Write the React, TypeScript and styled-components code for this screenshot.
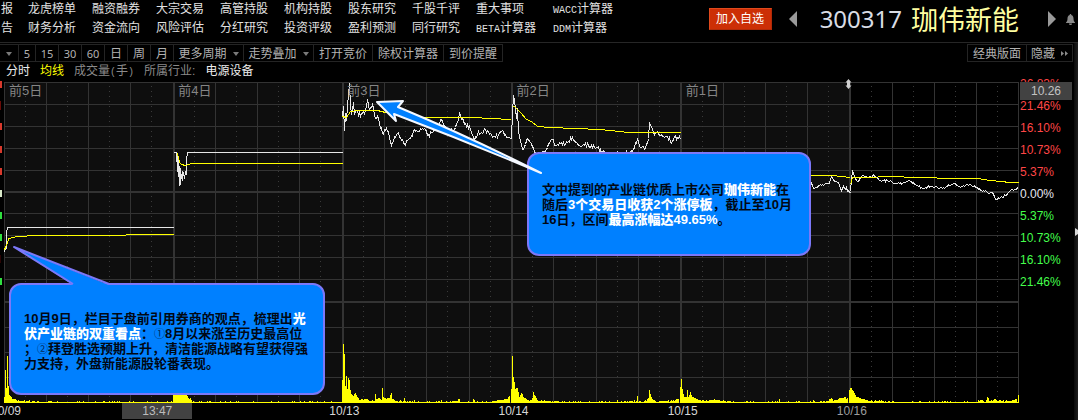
import React from "react";
import styled, { createGlobalStyle, css } from "styled-components";

const cjk = `"Liberation Sans", "Noto Sans CJK SC", sans-serif`;

const GlobalStyle = createGlobalStyle`
  * { box-sizing: border-box; }
  body { margin: 0; background: #000; }
  button { font: inherit; color: inherit; margin: 0; padding: 0; cursor: pointer; }
`;

const Page = styled.div`
  display: flex;
  flex-direction: column;
  min-height: 100vh;
  overflow: hidden;
  background: #000;
  color: #dcdcdc;
  font-family: ${cjk};
  font-size: 12px;
`;

/* ---------- header ---------- */

const Header = styled.header`
  display: flex;
  justify-content: space-between;
  min-height: 43px;
  border-bottom: 1px solid #262626;
`;

const Nav = styled.nav`
  display: grid;
  grid-template-rows: repeat(2, 16px);
  grid-auto-flow: column;
  grid-template-columns: 27px repeat(7, 64px) 77px auto;
  row-gap: 3px;
  align-content: start;
  padding: 1px 0 0 1px;
`;

const NavLink = styled.a`
  color: #e2e2e2;
  line-height: 16px;
  text-decoration: none;
  white-space: nowrap;
`;

const Code = styled.span`
  font-family: "Liberation Mono", monospace;
  font-size: 10px;
  line-height: 1;
`;

const Quote = styled.div`
  display: flex;
  align-items: center;
  height: 38px;
  padding-right: 3px;
`;

const AddButton = styled.button`
  width: 63px;
  height: 22px;
  margin-right: 17px;
  border: 1px solid #e0491c;
  border-right-color: #b02a08;
  border-bottom-color: #b02a08;
  background: #cc2f06;
  color: #fff;
  line-height: 20px;
`;

const IconButton = styled.button`
  display: flex;
  border: 0;
  background: none;
`;

const Symbol = styled.h1`
  display: flex;
  align-items: center;
  gap: 9px;
  margin: 0 28px 0 23px;
  font-weight: 400;
  line-height: 38px;
`;

const Ticker = styled.span`
  color: #d8dce4;
  font-family: "Noto Sans", sans-serif;
  font-size: 24px;
`;

const StockName = styled.span`
  padding-top: 3px;
  color: #ffffa0;
  font-size: 27px;
`;

const Bell = styled(IconButton)`
  margin-left: 10px;
`;

/* ---------- toolbar ---------- */

const Body = styled.div`
  display: flex;
  flex: 1;
`;

const Main = styled.main`
  display: flex;
  flex: 1;
  flex-direction: column;
  min-width: 0;
`;

const Bar = styled.div`
  display: flex;
  justify-content: space-between;
  margin-top: 1px;
  padding-right: 1px;
`;

const Group = styled.div<{ $framed?: boolean }>`
  display: flex;
  border: solid #242424;
  border-width: 1px 0;
  ${(p) => p.$framed && css`border-left-width: 1px;`}
`;

const Tool = styled.button<{ $w: number }>`
  display: flex;
  align-items: center;
  justify-content: center;
  gap: 6px;
  width: ${(p) => p.$w}px;
  height: 16px;
  padding-top: 1px;
  border: 0;
  border-right: 1px solid #242424;
  background: none;
  color: #b2b2b2;
  font-family: "Noto Sans", "Noto Sans CJK SC", sans-serif;
  line-height: 16px;
  white-space: nowrap;
`;

const Digits = styled.span`
  font-size: 11px;
`;

const Info = styled.div`
  display: flex;
  gap: 10px;
  height: 20px;
  padding: 0 6px;
  line-height: 18px;
  white-space: nowrap;
`;

const Label = styled.span<{ $tone: "white" | "yellow" | "grey" }>`
  color: ${(p) => ({ white: "#ececec", yellow: "#ffff00", grey: "#8a8a8a" })[p.$tone]};
`;

/* ---------- chart ---------- */

const ChartGrid = styled.section`
  display: grid;
  grid-template-columns: 4px minmax(0, 1fr) 55px;
`;

const Plot = styled.div`
  position: relative;
  grid-column: 2;
  height: 321px;
`;

const Drawing = styled.svg`
  display: block;
  width: 100%;
  height: 100%;
  overflow: visible;
`;

const DayRow = styled.div`
  position: absolute;
  inset: 0 0 auto;
  display: grid;
  grid-template-columns: repeat(6, 1fr);
  color: #858585;
  font-size: 13px;
  line-height: 18px;
`;

const Day = styled.span`
  padding-left: 5px;
`;

const Scale = styled.ol`
  position: relative;
  margin: -9px 0 0;
  padding: 0;
  list-style: none;
`;

const Tick = styled.li<{ $tone: "up" | "flat" | "down" }>`
  height: 22px;
  padding-left: 1px;
  line-height: 22px;
  color: ${(p) => ({ up: "#ff4646", flat: "#e6e6f0", down: "#44ff4c" })[p.$tone]};
`;

const PriceTag = styled.div`
  position: absolute;
  top: 9px;
  left: 1px;
  width: 52px;
  height: 18px;
  background: #424242;
  color: #c2c2c2;
  line-height: 19px;
  text-align: center;
`;

const Dates = styled.div`
  position: relative;
  grid-column: 1 / 3;
  display: grid;
  grid-template-columns: repeat(6, 1fr);
  height: 17px;
  padding-left: 4px;
  line-height: 17px;
  color: #d6d6d6;
`;

const DateLabel = styled.span<{ $dim?: boolean }>`
  margin-left: -13px;
  ${(p) => p.$dim && css`color: #9c9c9c;`}
`;

const TimeTag = styled.div`
  position: absolute;
  top: 0;
  left: 12%;
  width: 70px;
  height: 16px;
  background: #424242;
  color: #bcbcbc;
  line-height: 17px;
  text-align: center;
`;

const Callout = styled.aside<{ $left: number; $top: number; $w: number; $h: number; $pad: number }>`
  position: absolute;
  left: ${(p) => p.$left}px;
  top: ${(p) => p.$top}px;
  width: ${(p) => p.$w}px;
  height: ${(p) => p.$h}px;
  padding: ${(p) => p.$pad}px 0 0 13px;
  border: 2px solid #7c78f8;
  border-radius: 12px;
  background: #0080ff;
  color: #000814;
  font-size: 13px;
  font-weight: 700;
  line-height: 15px;
  white-space: nowrap;
`;

const Pointer = styled.svg`
  position: absolute;
  left: -2px;
  top: -2px;
  width: 1px;
  height: 1px;
  overflow: visible;
`;

const Em = styled.strong`
  color: #fff;
`;

const Circled = styled.span`
  color: #002a5c;
  font-family: "Noto Sans CJK SC", sans-serif;
  font-size: 11px;
  font-weight: 400;
  line-height: 1;
`;

const SideRail = styled.button`
  display: flex;
  align-items: center;
  justify-content: flex-end;
  width: 4px;
  padding-bottom: 0;
  border: 0;
  background: linear-gradient(90deg, #0a0a0a, #1e1e1e);
`;

/* ---------- data ---------- */

const nav = [
  ["报", "告"],
  ["龙虎榜单", "财务分析"],
  ["融资融券", "资金流向"],
  ["大宗交易", "风险评估"],
  ["高管持股", "分红研究"],
  ["机构持股", "投资评级"],
  ["股东研究", "盈利预测"],
  ["千股千评", "同行研究"],
  ["重大事项", "BETA计算器"],
  ["WACC计算器", "DDM计算器"],
].flat();

const tools: { text: string; w: number; menu?: boolean }[] = [
  { text: "5", w: 17 },
  { text: "15", w: 23 },
  { text: "30", w: 23 },
  { text: "60", w: 23 },
  { text: "日", w: 23 },
  { text: "周", w: 23 },
  { text: "月", w: 23 },
  { text: "更多周期", w: 70, menu: true },
  { text: "走势叠加", w: 70, menu: true },
  { text: "打开竞价", w: 59 },
  { text: "除权计算器", w: 71 },
  { text: "到价提醒", w: 59 },
];

const ticks = ["26.83%", "21.46%", "16.10%", "10.73%", "5.37%", "0.00%", "5.37%", "10.73%", "16.10%", "21.46%"];

type Pt = [number, number];

// Small repeatable jitter so the intraday lines look traded rather than drawn.
const jitter = (x: number) => {
  const s = Math.sin(x * 127.1 + 11.7) * 43758.5453;
  return (s - Math.floor(s)) * 2 - 1;
};

const sample = (keys: Pt[], amp: number) => {
  const out: string[] = [];
  for (let i = 0; i < keys.length - 1; i++) {
    const [x0, y0] = keys[i];
    const [x1, y1] = keys[i + 1];
    out.push(`${x0},${y0}`);
    for (let x = x0 + 1; x < x1; x++) {
      const y = y0 + ((y1 - y0) * (x - x0)) / (x1 - x0) + jitter(x) * amp;
      out.push(`${x},${Math.round(y)}`);
    }
  }
  out.push(keys[keys.length - 1].join());
  return out.join(" ");
};

const price: { keys: Pt[]; amp: number }[] = [
  { amp: 0, keys: [[4, 252], [5, 247], [6, 248], [6, 233], [7, 227], [173, 227]] },
  { amp: 0, keys: [[173, 152], [176, 152], [177, 171], [177, 154], [178, 176], [178, 160], [179, 185], [179, 166], [180, 184], [180, 168], [181, 178], [182, 171], [182, 180], [183, 172], [184, 178], [185, 172], [186, 174], [186, 160], [187, 152], [342, 152]] },
  { amp: 2.6, keys: [[342, 116], [343, 106], [344, 130], [345, 113], [346, 120], [348, 95], [349, 83], [350, 105], [351, 114], [353, 102], [354, 114], [356, 110], [358, 115], [361, 113], [365, 110], [367, 99], [369, 110], [372, 104], [375, 118], [378, 118], [382, 133], [385, 130], [388, 131], [391, 145], [394, 136], [397, 133], [400, 137], [404, 144], [408, 139], [411, 135], [414, 129], [418, 131], [422, 128], [428, 134], [432, 132], [436, 128], [441, 119], [444, 126], [448, 130], [453, 130], [457, 122], [459, 113], [461, 119], [464, 124], [469, 126], [471, 132], [474, 140], [477, 134], [481, 132], [485, 129], [490, 133], [495, 137], [500, 131], [505, 134], [509, 137], [511, 138]] },
  { amp: 2.2, keys: [[511, 138], [512, 112], [513, 95], [515, 108], [516, 118], [517, 108], [518, 132], [520, 142], [523, 149], [526, 140], [528, 139], [531, 143], [534, 152], [540, 155], [545, 150], [548, 143], [552, 139], [555, 145], [560, 143], [565, 144], [568, 141], [572, 137], [577, 143], [582, 145], [588, 145], [592, 147], [597, 147], [602, 152], [615, 154], [628, 153], [633, 148], [637, 139], [640, 147], [645, 148], [648, 138], [649, 122], [651, 126], [654, 134], [658, 133], [662, 136], [667, 136], [671, 143], [674, 136], [680, 139]] },
  { amp: 1.2, keys: [[805, 186], [811, 183], [814, 188], [817, 187], [820, 184], [824, 184], [829, 183], [831, 176], [835, 181], [838, 182], [841, 190], [843, 186], [850, 192]] },
  { amp: 1.2, keys: [[850, 191], [851, 178], [852, 171], [854, 176], [857, 181], [862, 175], [868, 177], [874, 175], [880, 180], [890, 180], [895, 183], [902, 183], [908, 180], [915, 184], [923, 188], [930, 186], [940, 187], [947, 186], [953, 183], [960, 187], [967, 184], [977, 187], [984, 191], [992, 192], [995, 199], [1000, 197], [1005, 195], [1010, 190], [1018, 188]] },
];

const average: Pt[][] = [
  [[4, 250], [5, 246], [7, 243], [8, 238], [14, 237], [15, 236], [26, 236], [27, 235], [125, 235], [126, 234], [173, 234]],
  [[177, 153], [179, 162], [181, 164], [185, 165], [188, 164], [191, 163], [342, 163]],
  [[342, 116], [346, 117], [350, 111], [358, 110], [377, 110], [385, 112], [400, 115], [420, 117], [473, 117], [490, 118], [511, 119]],
  [[512, 106], [514, 106], [520, 112], [526, 119], [531, 121], [537, 126], [550, 127], [575, 128], [600, 129], [628, 132], [680, 132]],
  [[805, 175], [832, 175], [840, 176], [850, 177]],
  [[850, 184], [852, 177], [903, 176], [904, 177], [936, 177], [937, 178], [977, 178], [990, 180], [1010, 182], [1018, 182]],
];

const volumeKeys: Pt[] = [
  [4, 6], [5, 33], [6, 15], [7, 47], [8, 17], [9, 8], [12, 4], [20, 2], [60, 1], [172, 1],
  [173, 8], [175, 13], [180, 16], [186, 9], [188, 5], [190, 5], [192, 1], [341, 1],
  [342, 23], [343, 59], [344, 49], [345, 17], [346, 27], [347, 14], [348, 25], [349, 23], [350, 13], [351, 9], [353, 7], [355, 10], [357, 6], [360, 3], [365, 4], [370, 2], [374, 2], [375, 9], [376, 4], [378, 5], [381, 3], [382, 15], [383, 6], [386, 4], [389, 5], [391, 10], [392, 4], [395, 2], [403, 2], [404, 5], [405, 2], [413, 1], [414, 3], [415, 1], [440, 1], [441, 3], [442, 1], [457, 2], [459, 4], [460, 1], [472, 1], [473, 4], [475, 1], [490, 1], [500, 3], [507, 4], [509, 7], [510, 0],
  [511, 14], [512, 47], [513, 26], [514, 21], [515, 14], [517, 15], [518, 11], [519, 6], [521, 10], [523, 6], [526, 4], [529, 2], [532, 5], [533, 11], [535, 7], [537, 3], [545, 2], [570, 1], [616, 1], [617, 3], [618, 1], [636, 2], [637, 7], [638, 1], [646, 2], [648, 5], [649, 13], [650, 9], [652, 4], [655, 2], [670, 2], [678, 4], [679, 0],
  [680, 16], [681, 24], [682, 14], [684, 6], [686, 6], [687, 13], [688, 6], [690, 11], [692, 6], [696, 4], [700, 3], [704, 2], [709, 3], [718, 3], [725, 2], [735, 1], [778, 1], [779, 4], [780, 1], [812, 1], [813, 3], [815, 1], [828, 2], [831, 5], [833, 2], [841, 5], [847, 5], [848, 0],
  [849, 13], [851, 15], [853, 12], [856, 6], [862, 4], [870, 2], [883, 2], [890, 1], [918, 1], [919, 2], [922, 1], [976, 1], [981, 3], [985, 1], [987, 6], [989, 2], [994, 4], [997, 2], [1010, 2], [1016, 4], [1017, 1], [1018, 8],
];

const volumePath = (() => {
  let d = "";
  for (let i = 0; i < volumeKeys.length; i++) {
    const [x0, h0] = volumeKeys[i];
    const [x1, h1] = volumeKeys[i + 1] ?? [x0 + 1, h0];
    for (let x = x0; x < x1; x++) {
      const base = h0 + ((h1 - h0) * (x - x0)) / (x1 - x0);
      const h = x === x0 ? h0 : Math.max(1, Math.round(base + jitter(x) * 0.8));
      if (h > 0) d += `M${x} 403v-${h}h1v${h}z`;
    }
  }
  return d;
})();

const dayLines = [173, 342, 511, 680, 849];
const hourLines = [46, 88, 130, 215, 257, 299, 384, 426, 469, 553, 596, 638, 723, 765, 807, 892, 934, 976, 1018];
const dotLines = [25, 67, 109, 151, 194, 236, 278, 320, 363, 405, 447, 490, 532, 575, 617, 659, 702, 744, 786, 828, 871, 913, 955, 997];
const rowLines = [82, 104, 126, 148, 170, 213, 235, 257, 279, 327, 352, 377, 402];
const edgeMarks: [number, string][] = [
  [81, "#d8392c"], [123, "#d8392c"], [146, "#d8392c"], [168, "#d8392c"],
  [190, "#d8e8c8"], [212, "#30e040"], [234, "#30e040"], [278, "#30e040"],
];

/* ---------- parts ---------- */

const Caret = () => (
  <svg width="6" height="4" viewBox="0 0 6 4" aria-hidden="true">
    <path d="M0 0h6L3 4z" fill="#7a7a7a" />
  </svg>
);

const NavText = ({ text }: { text: string }) => {
  const latin = text.match(/^[A-Z]+/)?.[0];
  return latin ? (
    <>
      <Code>{latin}</Code>
      {text.slice(latin.length)}
    </>
  ) : (
    <>{text}</>
  );
};

const Chart = () => (
  <Drawing viewBox="4 82 1015 321" preserveAspectRatio="none" role="img" aria-label="分时走势">
    <rect x="4" y="82" width="846" height="321" fill="#0e0e0e" />
    <g fill="#333" shapeRendering="crispEdges">
      {rowLines.map((y) => <rect key={y} x="4" y={y} width="1015" height="1" />)}
      {hourLines.map((x) => <rect key={x} x={x} y="82" width="1" height="321" />)}
      {dayLines.map((x) => <rect key={x} x={x} y="82" width="2" height="321" />)}
      <rect x="4" y="82" width="1" height="321" />
      <rect x="4" y="191" width="1015" height="2" />
      <rect x="4" y="301" width="1015" height="2" />
    </g>
    <g stroke="#3a3a3a" strokeDasharray="1 4" shapeRendering="crispEdges">
      {dotLines.map((x) => <path key={x} d={`M${x + 0.5} 86V301M${x + 0.5} 306V402`} />)}
    </g>
    <g shapeRendering="crispEdges">
      {edgeMarks.map(([y, c]) => <rect key={y} x="0" y={y} width="2" height="7" fill={c} />)}
      <rect x="0" y="101" width="1" height="9" fill="#6a0c08" />
      <rect x="0" y="255" width="1" height="8" fill="#2c0404" />
    </g>
    <path d={volumePath} fill="#ff0" shapeRendering="crispEdges" />
    <g fill="none" transform="translate(.5 .5)" shapeRendering="crispEdges">
      {price.map((s, i) => <polyline key={i} points={sample(s.keys, s.amp)} stroke="#e6e6e6" />)}
      {average.map((k, i) => <polyline key={i} points={k.join(" ")} stroke="#ff0" />)}
    </g>
    <path d="M848.5 79l3 3.5h-1.5v3h1.5l-3 3.500-3-3.500h1.500v-3h-1.500z" fill="#d0d0d0" />
  </Drawing>
);

export default function App() {
  return (
    <Page>
      <GlobalStyle />
      <Header>
        <Nav>
          {nav.map((t) => (
            <NavLink key={t} href="#"><NavText text={t} /></NavLink>
          ))}
        </Nav>
        <Quote>
          <AddButton>加入自选</AddButton>
          <IconButton aria-label="上一只">
            <svg width="8" height="16" viewBox="0 0 8 16"><path d="M8 0v16L0 8z" fill="#9a9a9a" /></svg>
          </IconButton>
          <Symbol>
            <Ticker>300317</Ticker>
            <StockName>珈伟新能</StockName>
          </Symbol>
          <IconButton aria-label="下一只">
            <svg width="9" height="16" viewBox="0 0 9 16"><path d="M1 0v16l8-8z" fill="#9a9a9a" /></svg>
          </IconButton>
          <Bell aria-label="提醒">
            <svg width="9" height="11" viewBox="0 0 9 11">
              <path d="M4.500 0c.6 0 .8.4.8 1C7 1.600 7.500 3 7.500 4.500 7.500 6.500 8 7.500 9 8.500V9H0v-.5C1 7.500 1.500 6.500 1.500 4.500 1.500 3 2 1.600 3.700 1c0-.6.2-1 .8-1zM3 9.500h3C6 10.500 5.300 11 4.500 11S3 10.500 3 9.500z" fill="#8a8a8a" />
            </svg>
          </Bell>
        </Quote>
      </Header>
      <Body>
        <Main>
          <Bar>
            <Group>
              <Tool $w={19} aria-label="更多"><Caret /></Tool>
              {tools.map((t) => (
                <Tool key={t.text} $w={t.w} aria-haspopup={t.menu}>
                  {/^\d/.test(t.text) ? <Digits>{t.text}</Digits> : t.text}
                  {t.menu && <Caret />}
                </Tool>
              ))}
            </Group>
            <Group $framed>
              <Tool $w={59}>经典版面</Tool>
              <Tool $w={46}>
                隐藏
                <svg width="7" height="5" viewBox="0 0 7 5" aria-hidden="true">
                  <path d="M0 0l3 2.500L0 5zM4 0l3 2.500L4 5z" fill="#8a8a8a" />
                </svg>
              </Tool>
            </Group>
          </Bar>
          <Info>
            <Label $tone="white">分时</Label>
            <Label $tone="yellow">均线</Label>
            <Label $tone="grey">成交量<Code>(</Code>手<Code>)</Code></Label>
            <Label $tone="grey">所属行业:</Label>
            <Label $tone="white">电源设备</Label>
          </Info>
          <ChartGrid>
            <Plot>
              <Chart />
              <DayRow>
                {[5, 4, 3, 2, 1].map((n) => <Day key={n}>前{n}日</Day>)}
              </DayRow>
              <Callout $left={5} $top={201} $w={316} $h={112} $pad={26}>
                <Pointer aria-hidden="true">
                  <path d="M64 2L5-36 100 2z" fill="#0080ff" />
                  <path d="M64 1L5-36 100 1" fill="none" stroke="#7c78f8" strokeWidth="2" strokeLinejoin="round" />
                </Pointer>
                10月9日，栏目于盘前引用券商的观点，梳理出<Em>光</Em>
                <br />
                <Em>伏产业链的双重看点</Em>：<Circled>①</Circled>8月以来涨至历史最高位
                <br />
                ；<Circled>②</Circled>拜登胜选预期上升，清洁能源战略有望获得强
                <br />
                力支持，外盘新能源股轮番表现。
              </Callout>
              <Callout $left={523} $top={70} $w={284} $h={104} $pad={28}>
                <Pointer aria-hidden="true">
                  <path
                    d="M-150-50L-124-51-129-45Q-57-15 14 21Q-59-10-133-38L-131-31z"
                    fill="#0080ff"
                    stroke="#f4f8ff"
                    strokeWidth="2"
                    strokeLinejoin="round"
                  />
                </Pointer>
                文中提到的产业链优质上市公司<Em>珈伟新能</Em>在
                <br />
                随后<Em>3个交易日收获2个涨停板</Em>，截止至10月
                <br />
                16日，区间<Em>最高涨幅达49.65%</Em>。
              </Callout>
            </Plot>
            <Scale>
              {ticks.map((t, i) => (
                <Tick key={i} $tone={i < 5 ? "up" : i === 5 ? "flat" : "down"}>{t}</Tick>
              ))}
              <PriceTag>10.26</PriceTag>
            </Scale>
            <Dates>
              {["10/09", "", "10/13", "10/14", "10/15", "10/16"].map((d, i) => (
                <DateLabel key={i} $dim={i === 5}>{d}</DateLabel>
              ))}
              <TimeTag>13:47</TimeTag>
            </Dates>
          </ChartGrid>
        </Main>
        <SideRail aria-label="展开">
          <svg width="3" height="8" viewBox="0 0 3 8"><path d="M0 0l3 2v4L0 8z" fill="#d8d8d8" /></svg>
        </SideRail>
      </Body>
    </Page>
  );
}
